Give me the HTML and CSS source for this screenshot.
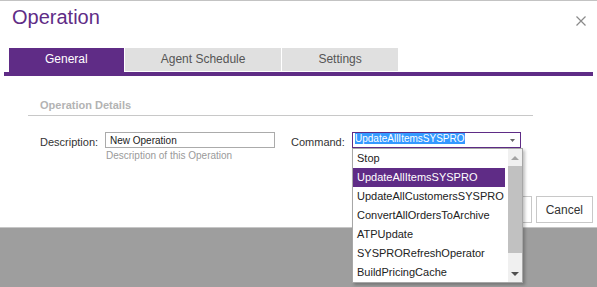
FILE: index.html
```html
<!DOCTYPE html>
<html lang="en">
  <head>
    <meta charset="UTF-8" />
    <meta name="viewport" content="width=device-width, initial-scale=1.0" />
    <title>Operation</title>
    <link rel="stylesheet" href="styles.css">
  </head>
  <body>
    <div class="page">
      <div class="dialog">
        <div class="dialog-header">
          <h1 class="dialog-title">Operation</h1>
          <span class="dialog-close">
            <svg width="10" height="10" viewBox="0 0 10 10">
              <path d="M0.5 0.5 L9.5 9.5 M9.5 0.5 L0.5 9.5" stroke="#8a8a8a" stroke-width="1.2" fill="none" />
            </svg>
          </span>
        </div>

        <div class="tabs">
          <a href="#" class="tab active">General</a>
          <a href="#" class="tab">Agent Schedule</a>
          <a href="#" class="tab">Settings</a>
        </div>

        <div class="section">
          <h2 class="section-title">Operation Details</h2>
          <div class="form-row">
            <label class="field-label" for="description">Description:</label>
            <div class="field">
              <input type="text" id="description" class="text-input" value="New Operation" />
              <div class="help">Description of this Operation</div>
            </div>
            <label class="field-label command-label">Command:</label>
            <div class="select-wrap">
              <div class="select">
                <span class="select-value">UpdateAllItemsSYSPRO</span>
                <svg class="select-arrow" width="5" height="3" viewBox="0 0 5 3">
                  <polygon points="0,0 5,0 2.5,3" fill="#666" />
                </svg>
              </div>
              <!-- open dropdown list -->
              <div class="dropdown">
                <ul class="options">
                  <li>Stop</li>
                  <li class="selected">UpdateAllItemsSYSPRO</li>
                  <li>UpdateAllCustomersSYSPRO</li>
                  <li>ConvertAllOrdersToArchive</li>
                  <li>ATPUpdate</li>
                  <li>SYSPRORefreshOperator</li>
                  <li>BuildPricingCache</li>
                </ul>
                <div class="scrollbar">
                  <div class="scroll-btn">
                    <svg width="8" height="4" viewBox="0 0 8 4">
                      <polygon points="0,4 8,4 4,0" fill="#a3a3a3" />
                    </svg>
                  </div>
                  <div class="scroll-thumb"></div>
                  <div class="scroll-space"></div>
                  <div class="scroll-btn">
                    <svg width="8" height="4" viewBox="0 0 8 4">
                      <polygon points="0,0 8,0 4,4" fill="#505050" />
                    </svg>
                  </div>
                </div>
              </div>
            </div>
          </div>
        </div>

        <div class="dialog-footer">
          <button class="btn">Save</button>
          <button class="btn">Cancel</button>
        </div>
      </div>
      <div class="overlay"></div>
    </div>
  </body>
</html>
```

FILE: styles.css
```css
body {
  font-family: "Liberation Sans", Arial, sans-serif;
  background-color: #fff;
  color: #333;
  margin: 0;
}
.page {
  height: 100vh;
  display: flex;
  flex-direction: column;
  overflow: hidden;
}
.dialog {
  height: 227px;
  box-sizing: border-box;
  border-top: 1px solid #c3c3c3;
  background-color: #fff;
  flex-shrink: 0;
}
.dialog-header {
  display: flex;
  justify-content: space-between;
  align-items: flex-start;
  padding: 6px 11px 0 12px;
}
.dialog-title {
  margin: 0;
  font-size: 20px;
  font-weight: normal;
  line-height: 20px;
  color: #5f2c86;
}
.dialog-close {
  display: block;
  margin-top: 9px;
  width: 10px;
  height: 10px;
}
.dialog-close svg {
  display: block;
}
.tabs {
  display: flex;
  gap: 1px;
  margin: 21px 4px 0;
  padding-left: 5px;
  border-bottom: 4px solid #5f2c86;
}
.tab {
  display: block;
  height: 23px;
  line-height: 23px;
  padding: 0 36px;
  font-size: 12px;
  color: #555;
  text-decoration: none;
  background-color: #e0e0e0;
  border-bottom: 1px solid #fff;
}
.tab.active {
  background-color: #5f2c86;
  color: #fff;
  border-bottom-color: #5f2c86;
}
.section {
  margin: 23px 64px 0 28px;
}
.section-title {
  margin: 0;
  padding: 0 0 4px 12px;
  font-size: 11px;
  line-height: 12px;
  font-weight: bold;
  color: #b3b3b3;
  border-bottom: 1px solid #c8c8c8;
}
.form-row {
  display: flex;
  align-items: flex-start;
  margin-top: 16px;
  padding-left: 12px;
}
.field-label {
  width: 65px;
  padding-top: 2px;
  font-size: 11px;
  line-height: 16px;
  color: #333;
}
.command-label {
  width: 61px;
  margin-left: 16px;
}
.field {
  width: 170px;
}
.text-input {
  display: block;
  width: 170px;
  height: 16px;
  box-sizing: border-box;
  margin: 0;
  padding: 0 4px;
  border: 1px solid #ababab;
  font-family: inherit;
  font-size: 10px;
  color: #222;
  outline: none;
}
.help {
  margin-top: 2px;
  padding-left: 1px;
  font-size: 10px;
  line-height: 12px;
  color: #9a9a9a;
}
.select-wrap {
  position: relative;
  width: 169px;
}
.select {
  display: flex;
  align-items: flex-start;
  height: 16px;
  box-sizing: border-box;
  padding: 0 2px;
  border: 1px solid #5f2c86;
}
.select-value {
  font-size: 10px;
  line-height: 11px;
  color: #fff;
  background-color: #3399ff;
}
.select-arrow {
  display: block;
  margin: 6px 3px 0 auto;
}
.dropdown {
  position: absolute;
  left: 0;
  top: 16px;
  width: 171px;
  height: 135px;
  box-sizing: border-box;
  display: flex;
  background-color: #fff;
  border: 1px solid #a7a7a7;
  box-shadow: 2px 2px 3px rgba(0, 0, 0, 0.25);
  z-index: 2;
}
.options {
  list-style-type: none;
  margin: 0 3px 0 0;
  padding: 0;
  width: 152px;
}
.options li {
  height: 19px;
  line-height: 19px;
  padding-left: 4px;
  font-size: 11px;
  color: #222;
  white-space: nowrap;
}
.options li.selected {
  background-color: #5f2c86;
  color: #fff;
}
.scrollbar {
  width: 14px;
  display: flex;
  flex-direction: column;
  background-color: #f0f0f0;
}
.scroll-btn {
  height: 17px;
  display: flex;
  align-items: center;
  justify-content: center;
}
.scroll-btn svg {
  display: block;
}
.scroll-thumb {
  height: 87px;
  background-color: #c1c1c1;
}
.scroll-space {
  flex: 1;
}
.dialog-footer {
  display: flex;
  justify-content: flex-end;
  gap: 4px;
  margin-top: 34px;
  padding-right: 4px;
}
.btn {
  height: 27px;
  padding: 0 9px;
  background-color: #fff;
  border: 1px solid #c8c8c8;
  font-family: inherit;
  font-size: 12px;
  color: #333;
}
.overlay {
  flex: 1;
  background-color: #9e9e9e;
  border-top: 1px solid #c6c6c6;
}
```
